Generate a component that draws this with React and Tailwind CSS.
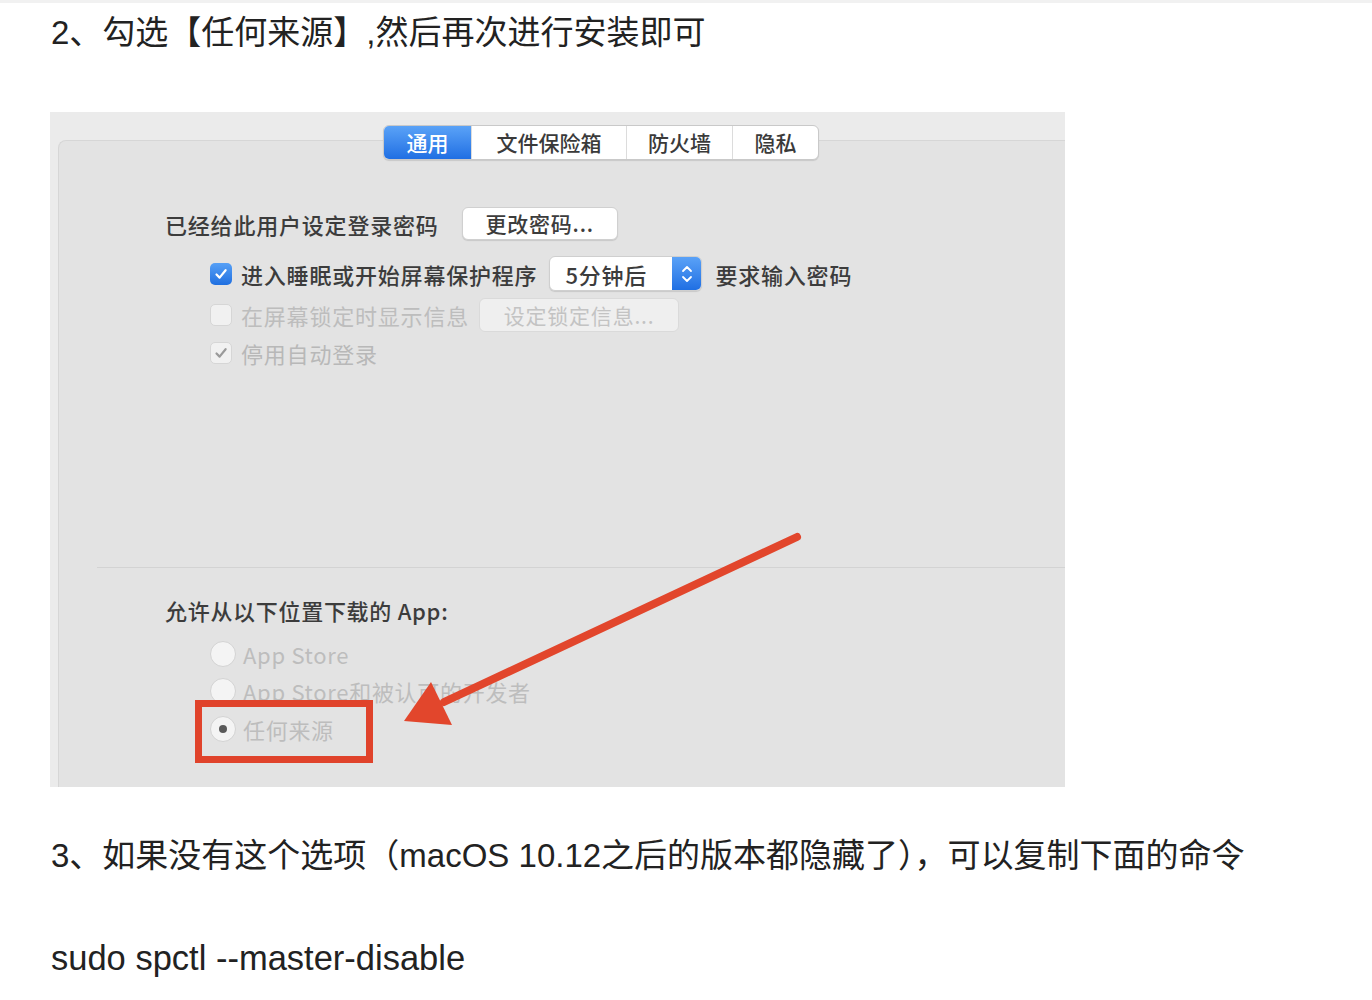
import React from "react";

const PAGE_FONT = { fontFamily: '"Liberation Sans", "Noto Sans CJK SC", sans-serif' };
const UI_FONT = { fontFamily: '"Noto Sans CJK SC", "Noto Sans", sans-serif' };

function Check({ color = "#ffffff" }) {
  return (
    <svg width="16" height="16" viewBox="0 0 16 16" fill="none">
      <path d="M3.5 8.5 L6.6 11.6 L12.6 4.2" stroke={color} strokeWidth="2.2" strokeLinecap="round" strokeLinejoin="round" />
    </svg>
  );
}

function Tabs() {
  const tabs = [
    { label: "通用", w: "w-[87px]", active: true },
    { label: "文件保险箱", w: "w-[155px]" },
    { label: "防火墙", w: "w-[106px]" },
    { label: "隐私", w: "w-[86px]" },
  ];
  return (
    <div className="-mt-[16px] ml-[324px] flex h-[35px] w-fit overflow-hidden rounded-[6px] border border-[#c9c9c9] bg-white shadow-[0_1px_1px_rgba(0,0,0,0.12)]">
      {tabs.map((t) => (
        <div
          key={t.label}
          className={
            t.active
              ? "flex h-full w-[87px] items-center justify-center bg-gradient-to-b from-[#5aa2f7] to-[#1f6fe3] text-[21px] font-medium text-white"
              : "flex h-full items-center justify-center border-l border-[#dcdcdc] text-[21px] font-medium text-[#3a3a3a] " + t.w
          }
        >
          {t.label}
        </div>
      ))}
    </div>
  );
}

function Radio({ selected }) {
  return (
    <div className="flex h-[26px] w-[26px] items-center justify-center rounded-full border border-[#d3d3d3] bg-[#f4f4f4]">
      {selected && <div className="h-[8px] w-[8px] rounded-full bg-[#5a5a5a]" />}
    </div>
  );
}

export default function App() {
  return (
    <div className="min-h-[1000px] w-[1372px] bg-white text-[#222222]" style={PAGE_FONT}>
      <div className="h-[3px] bg-[#f1f1f1]" />
      <div className="mt-[7px] ml-[51px] flex h-[44px] items-center text-[33px] leading-none">
        2、勾选【任何来源】,然后再次进行安装即可
      </div>

      <div className="relative mt-[58px] ml-[50px] flex h-[675px] w-[1015px] flex-col bg-[#ebebeb]" style={UI_FONT}>
        <div className="mt-[28px] ml-[8px] flex flex-1 flex-col rounded-tl-[8px] border-t border-l border-[#d6d6d6] bg-[#e3e3e3]">
          <Tabs />

          <div className="mt-[47px] ml-[106px] flex h-[33px] items-center gap-[23px] text-[22px] font-medium leading-none tracking-[0.8px] text-[#3c3c3c]">
            <span>已经给此用户设定登录密码</span>
            <div className="flex h-[33px] w-[156px] items-center justify-center rounded-[6px] border border-[#d0d0d0] bg-white text-[21px] shadow-[0_1px_1px_rgba(0,0,0,0.12)]">
              更改密码...
            </div>
          </div>

          <div className="mt-[16px] ml-[151px] flex h-[35px] items-center text-[22px] font-medium leading-none tracking-[0.8px] text-[#3c3c3c]">
            <div className="flex h-[22px] w-[22px] items-center justify-center rounded-[5px] bg-gradient-to-b from-[#56a0f6] to-[#1f6fe0]">
              <Check />
            </div>
            <span className="ml-[9px]">进入睡眠或开始屏幕保护程序</span>
            <div className="ml-[12px] flex h-[35px] w-[153px] overflow-hidden rounded-[6px] border border-[#cfcfcf] bg-white shadow-[0_1px_1px_rgba(0,0,0,0.12)]">
              <div className="flex flex-1 items-center pl-[15px]">5分钟后</div>
              <div className="flex w-[29px] items-center justify-center bg-gradient-to-b from-[#5aa2f7] to-[#1f6fe3]">
                <svg width="14" height="22" viewBox="0 0 14 22" fill="none">
                  <path d="M3 8 L7 4 L11 8" stroke="#ffffff" strokeWidth="1.8" strokeLinecap="round" strokeLinejoin="round" />
                  <path d="M3 14 L7 18 L11 14" stroke="#ffffff" strokeWidth="1.8" strokeLinecap="round" strokeLinejoin="round" />
                </svg>
              </div>
            </div>
            <span className="ml-[13px]">要求输入密码</span>
          </div>

          <div className="mt-[7px] ml-[151px] flex h-[34px] items-center text-[22px] leading-none tracking-[0.8px] text-[#bdbdbd]">
            <div className="h-[22px] w-[22px] rounded-[5px] border border-[#d6d6d6] bg-[#f1f1f1]" />
            <span className="ml-[9px]">在屏幕锁定时显示信息</span>
            <div className="ml-[10px] flex h-[34px] w-[200px] items-center justify-center rounded-[6px] border border-[#dadada] bg-[#efefef] text-[21px] text-[#c3c3c3]">
              设定锁定信息...
            </div>
          </div>

          <div className="mt-[8px] ml-[151px] flex h-[26px] items-center text-[22px] leading-none tracking-[0.8px] text-[#b8b8b8]">
            <div className="flex h-[22px] w-[22px] items-center justify-center rounded-[5px] border border-[#d6d6d6] bg-[#f1f1f1]">
              <Check color="#9a9a9a" />
            </div>
            <span className="ml-[9px]">停用自动登录</span>
          </div>

          <div className="mt-[201px] ml-[38px] h-px bg-[#d3d3d3]" />

          <div className="mt-[27px] ml-[106px] flex h-[30px] items-center text-[22px] font-medium leading-none tracking-[0.7px] text-[#3c3c3c]">
            允许从以下位置下载的 App:
          </div>

          <div className="mt-[14px] ml-[151px] flex h-[30px] items-center gap-[7px] text-[22px] leading-none tracking-[0.7px] text-[#bdbdbd]">
            <Radio />
            <span>App Store</span>
          </div>
          <div className="mt-[7px] ml-[151px] flex h-[30px] items-center gap-[7px] text-[22px] leading-none tracking-[0.7px] text-[#bdbdbd]">
            <Radio />
            <span>App Store和被认可的开发者</span>
          </div>
          <div className="mt-[8px] ml-[151px] flex h-[30px] items-center gap-[7px] text-[22px] leading-none tracking-[0.7px] text-[#bdbdbd]">
            <Radio selected />
            <span>任何来源</span>
          </div>
        </div>

        <div className="absolute left-[145px] top-[588px] h-[63px] w-[178px] border-[7px] border-[#e0432b]" />

        <svg className="pointer-events-none absolute inset-0" width="1015" height="675" viewBox="0 0 1015 675">
          <line x1="747" y1="425" x2="394" y2="590" stroke="#e2462c" strokeWidth="8" strokeLinecap="round" />
          <polygon points="354,609 381,570 402,613" fill="#e2462c" />
        </svg>
      </div>

      <div className="mt-[46px] ml-[51px] flex h-[44px] items-center text-[33px] leading-none">
        3、如果没有这个选项（macOS 10.12之后的版本都隐藏了），可以复制下面的命令
      </div>

      <div className="mt-[59px] ml-[51px] flex h-[44px] items-center text-[34.5px] leading-none">
        sudo spctl --master-disable
      </div>
    </div>
  );
}
